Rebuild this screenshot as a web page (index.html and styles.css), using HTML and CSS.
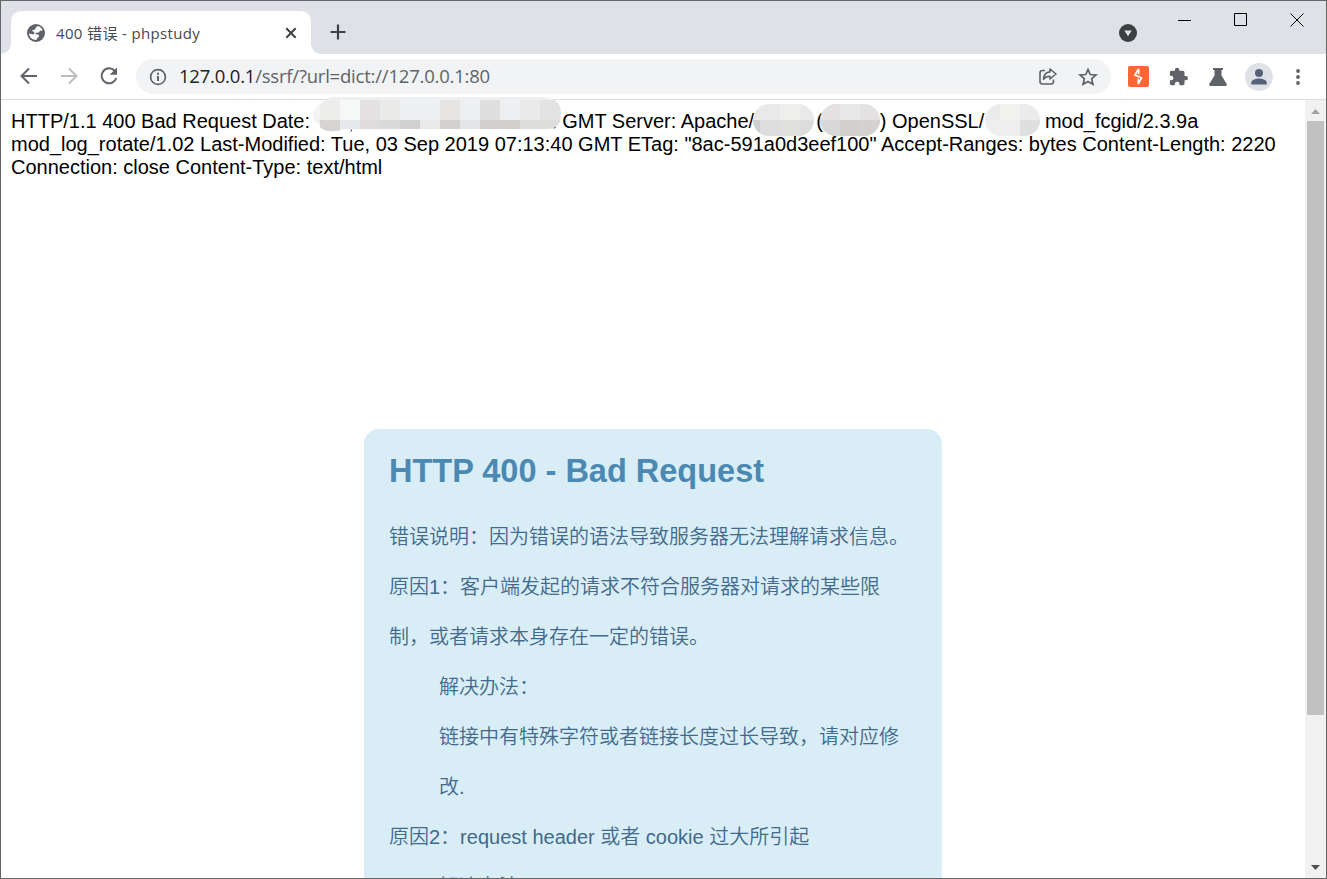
FILE: index.html
```html
<!DOCTYPE html>
<html lang="zh-CN">
  <head>
    <meta charset="UTF-8" />
    <meta name="viewport" content="width=device-width, initial-scale=1.0" />
    <title>400 错误 - phpstudy</title>
    <link rel="stylesheet" href="styles.css">
  </head>
  <body>
    <!-- Tab Strip -->
    <div class="tab-strip">
      <div class="tab">
        <svg class="globe" width="20" height="20" viewBox="0 0 20 20">
          <circle cx="10" cy="10" r="9" fill="#5f6368" />
          <path d="M11.500 3c2.600.5 4.500 2.200 5.300 4.600l-2.800.2-1.200 1.700-3.100.2v1.600l2.600.3.900 1.800-1.700 1.400-1.200 2.200C6 17 3.200 14.200 3 10.600l4 .9 1.600-1-.8-1.900H6.400l.1-1.600 2.700-.4.300-1.700z" fill="#fff" />
        </svg>
        <span class="tab-title">400 错误 - phpstudy</span>
        <svg class="tab-close" width="12" height="12" viewBox="0 0 12 12">
          <path d="M1.300 1.300l9.400 9.400M10.700 1.300l-9.400 9.400" stroke="#3c4043" stroke-width="2" />
        </svg>
      </div>
      <svg class="new-tab" width="16" height="16" viewBox="0 0 16 16">
        <path d="M8 .5v15M.5 8h15" stroke="#3c4043" stroke-width="2.200" />
      </svg>
      <svg class="tab-search" width="18" height="18" viewBox="0 0 18 18">
        <circle cx="9" cy="9" r="9" fill="#3c4043" />
        <path d="M5.300 6.500h7.400L9 12.300z" fill="#dee1e6" />
      </svg>
      <div class="window-buttons">
        <svg width="14" height="14" viewBox="0 0 14 14"><path d="M0 7.500h13" stroke="#000" /></svg>
        <svg width="14" height="14" viewBox="0 0 14 14"><path d="M.5.5h12v12H.5z" fill="none" stroke="#000" /></svg>
        <svg width="14" height="14" viewBox="0 0 14 14"><path d="M.5.5l13 13M13.500.5l-13 13" stroke="#000" /></svg>
      </div>
    </div>

    <!-- Toolbar -->
    <div class="toolbar">
      <div class="nav-buttons">
        <svg width="20" height="20" viewBox="0 0 20 20" fill="none" stroke="#5f6368" stroke-width="2">
          <path d="M18 10H3M10 2.500L2.500 10l7.500 7.500" />
        </svg>
        <svg width="20" height="20" viewBox="0 0 20 20" fill="none" stroke="#babcbe" stroke-width="2">
          <path d="M2 10h15M10 2.500l7.500 7.500-7.500 7.500" />
        </svg>
        <svg width="20" height="20" viewBox="0 0 20 20" fill="none" stroke="#5f6368" stroke-width="2">
          <path d="M15.600 4.700A7.500 7.500 0 1 0 17.300 12" />
          <path d="M18 1.500v7.300h-7.300z" fill="#5f6368" stroke="none" />
        </svg>
      </div>
      <div class="address-bar">
        <svg width="18" height="18" viewBox="0 0 18 18">
          <circle cx="9" cy="9" r="7.400" fill="none" stroke="#5f6368" stroke-width="1.700" />
          <path d="M9 8v5M9 4.700v2" stroke="#5f6368" stroke-width="2" />
        </svg>
        <div class="url"><span>127.0.0.1</span>/ssrf/?url=dict://127.0.0.1:80</div>
        <svg class="share" width="20" height="20" viewBox="0 0 20 20" fill="none" stroke="#5f6368" stroke-width="1.600" stroke-linejoin="round">
          <path d="M7 3.500H4.500Q2 3.500 2 6v8.500q0 2.500 2.500 2.500h8.500q2.500 0 2.500-2.500v-2" />
          <path d="M12 2l6 5-6 5V9.300c-3 0-5 .8-6.500 2.900.3-4 2.500-7 6.500-7.300z" />
        </svg>
        <svg class="star" width="20" height="20" viewBox="0 0 20 20">
          <path d="M10 2.300l2.250 5.200 5.700.5-4.300 3.750 1.300 5.550L10 14.400l-4.950 2.900 1.300-5.550L2.050 8l5.700-.5z" fill="none" stroke="#5f6368" stroke-width="1.700" />
        </svg>
      </div>
      <div class="extensions">
        <svg width="21" height="21" viewBox="0 0 21 21">
          <rect width="21" height="21" rx="2" fill="#ff6633" />
          <path d="M10.600 2.800L7 9l6.500 2.800-3.400 6.400M10.700 3v5.200M10.300 12.500v5.300" fill="none" stroke="#fff" stroke-width="1.700" />
        </svg>
        <svg width="20" height="20" viewBox="0 0 20 20">
          <path d="M16.800 9h-1.300V5.500c0-.9-.7-1.700-1.700-1.700h-3.500V3a2.200 2.200 0 0 0-4.400 0v.8H2.600c-1 0-1.700.8-1.700 1.700v3.200h1.200a2.300 2.300 0 0 1 0 4.600H.9v3.300c0 1 .8 1.700 1.700 1.700h3.300v-1.200a2.300 2.300 0 0 1 4.600 0v1.200h3.300c1 0 1.700-.8 1.700-1.700v-3.300h1.300a2.150 2.150 0 0 0 0-4.300z" fill="#5f6368" />
        </svg>
        <svg width="18" height="18" viewBox="0 0 18 18">
          <path d="M4 0h10v2h-1.500v5.500L17.700 16q.6 1.900-1.200 2h-15Q-.3 17.900.3 16l5.200-8.500V2H4z" fill="#5f6368" />
        </svg>
        <svg class="avatar" width="28" height="28" viewBox="0 0 28 28">
          <circle cx="14" cy="14" r="14" fill="#dee1e6" />
          <circle cx="14" cy="10" r="4" fill="#57617a" />
          <path d="M6.300 21.500v-2c0-2.600 5.100-4 7.700-4s7.700 1.400 7.700 4v2z" fill="#57617a" />
        </svg>
        <svg width="4" height="18" viewBox="0 0 4 18" fill="#5f6368">
          <circle cx="2" cy="3" r="1.900" /><circle cx="2" cy="9" r="1.900" /><circle cx="2" cy="15" r="1.900" />
        </svg>
      </div>
    </div>

    <!-- Page -->
    <div class="viewport">
      <div class="page">
        <div class="response">
          <div class="line">
            <span>HTTP/1.1 400 Bad Request Date:</span>
            <span class="mask mask-date">
              <svg width="248" height="35" viewBox="0 0 248 35">
                <clipPath id="dateClip"><path d="M18 0H232Q248 2 248 17T234 32H30Q24 35 16 34Q7 33 6 27Q0 23 0 17T18 0z" /></clipPath>
                <g clip-path="url(#dateClip)">
                  <rect width="248" height="35" fill="#eeeff0" />
                  <rect y="3" width="7" height="20" fill="#f3f3f2" />
                  <rect x="7" y="3" width="20" height="20" fill="#ededec" />
                  <rect x="27" y="3" width="20" height="20" fill="#f7f9f8" />
                  <rect x="47" y="3" width="20" height="20" fill="#e3e1e2" />
                  <rect x="67" y="3" width="20" height="20" fill="#eaeae8" />
                  <rect x="127" y="3" width="20" height="20" fill="#e6e4e2" />
                  <rect x="167" y="3" width="20" height="20" fill="#dfdfdf" />
                  <rect x="207" y="3" width="20" height="20" fill="#eaeaea" />
                  <rect x="227" y="3" width="21" height="20" fill="#e3e3e3" />
                  <rect x="7" y="23" width="20" height="12" fill="#d5d4d1" />
                  <rect x="27" y="23" width="20" height="12" fill="#e6e8e9" />
                  <rect x="47" y="23" width="20" height="12" fill="#dddbdc" />
                  <rect x="67" y="23" width="20" height="12" fill="#dadada" />
                  <rect x="87" y="23" width="20" height="12" fill="#d1d1d1" />
                  <rect x="107" y="23" width="20" height="12" fill="#e9e9e9" />
                  <rect x="127" y="23" width="20" height="12" fill="#d3d2d1" />
                  <rect x="147" y="23" width="20" height="12" fill="#e4e5e6" />
                  <rect x="167" y="23" width="40" height="12" fill="#d1d0cf" />
                  <rect x="207" y="23" width="41" height="12" fill="#dddddc" />
                </g>
                <path d="M38.700 32.500l-.8 2M241 31.500l1.500-1.500" stroke="#222" />
              </svg>
            </span>
            <span>GMT Server: Apache/</span><span class="mask mask-apache">
              <svg width="61" height="32" viewBox="0 0 61 32">
                <clipPath id="pillA"><rect width="61" height="32" rx="16" /></clipPath>
                <g clip-path="url(#pillA)">
                  <rect width="61" height="32" fill="#e9e9e9" />
                  <rect x="27" width="20" height="16" fill="#efefee" />
                  <rect y="16" width="7" height="16" fill="#cfcfcf" />
                  <rect x="7" y="16" width="20" height="16" fill="#dedede" />
                  <rect x="27" y="16" width="20" height="16" fill="#e0e0df" />
                  <rect x="47" y="16" width="14" height="16" fill="#dcdcdc" />
                </g>
              </svg>
            </span><span>(</span><span class="mask mask-os">
              <svg width="60" height="32" viewBox="0 0 60 32">
                <clipPath id="pillB"><rect width="60" height="32" rx="16" /></clipPath>
                <g clip-path="url(#pillB)">
                  <rect width="60" height="32" fill="#e3e1e2" />
                  <rect x="20" width="20" height="16" fill="#e9e8e8" />
                  <rect y="16" width="20" height="16" fill="#d8d8d8" />
                  <rect x="20" y="16" width="30" height="16" fill="#d0cfce" />
                  <rect x="40" y="16" width="20" height="16" fill="#d3d2d1" />
                </g>
              </svg>
            </span><span>) OpenSSL/</span><span class="mask mask-ssl">
              <svg width="55" height="32" viewBox="0 0 55 32">
                <clipPath id="pillC"><rect width="55" height="32" rx="16" /></clipPath>
                <g clip-path="url(#pillC)">
                  <rect width="55" height="32" fill="#ebebeb" />
                  <rect x="15" width="20" height="16" fill="#f1f1f0" />
                  <rect y="16" width="35" height="16" fill="#efefef" />
                  <rect x="35" y="16" width="20" height="16" fill="#dfdfdf" />
                </g>
              </svg>
            </span>
            <span>mod_fcgid/2.3.9a</span>
          </div>
          <div class="line">mod_log_rotate/1.02 Last-Modified: Tue, 03 Sep 2019 07:13:40 GMT ETag: "8ac-591a0d3eef100" Accept-Ranges: bytes Content-Length: 2220</div>
          <div class="line">Connection: close Content-Type: text/html</div>
        </div>

        <div class="error-box">
          <h1>HTTP 400 - Bad Request</h1>
          <p>错误说明：因为错误的语法导致服务器无法理解请求信息。</p>
          <p>原因1：客户端发起的请求不符合服务器对请求的某些限制，或者请求本身存在一定的错误。</p>
          <p class="solution">解决办法：</p>
          <p class="solution">链接中有特殊字符或者链接长度过长导致，请对应修改.</p>
          <p>原因2：request header 或者 cookie 过大所引起</p>
          <p class="solution">解决办法：</p>
        </div>
      </div>

      <!-- Scrollbar -->
      <div class="scrollbar">
        <svg width="9" height="5" viewBox="0 0 9 5"><path d="M0 5L4.500 0 9 5z" fill="#a3a3a3" /></svg>
        <div class="thumb"></div>
        <svg width="9" height="5" viewBox="0 0 9 5"><path d="M0 0h9L4.500 5z" fill="#505050" /></svg>
      </div>
    </div>
  </body>
</html>
```
FILE: styles.css
```css
/* Global Reset */
* {
  margin: 0;
  padding: 0;
  box-sizing: border-box;
}

html {
  overflow: hidden;
}

body {
  height: 100vh;
  display: flex;
  flex-direction: column;
  border: 1px solid #666;
  background-color: #fff;
  font-family: "Liberation Sans", "Noto Sans CJK SC", sans-serif;
  overflow: hidden;
}

svg {
  display: block;
  flex: none;
}

/* Tab Strip */
.tab-strip {
  height: 53px;
  flex: none;
  display: flex;
  align-items: flex-start;
  padding-left: 10px;
  background-color: #dee1e6;
}

.tab {
  position: relative;
  width: 300px;
  height: 43px;
  margin-top: 10px;
  padding: 0 14px 0 15px;
  display: flex;
  align-items: center;
  background-color: #fff;
  border-radius: 10px 10px 0 0;
}

/* Curved feet of the active tab */
.tab::before,
.tab::after {
  content: "";
  position: absolute;
  bottom: 0;
  width: 10px;
  height: 10px;
}

.tab::before {
  left: -10px;
  background: radial-gradient(circle at 0 0, transparent 9.5px, #fff 10px);
}

.tab::after {
  right: -10px;
  background: radial-gradient(circle at 100% 0, transparent 9.5px, #fff 10px);
}

.tab-title {
  flex: 1;
  margin-left: 10px;
  font-family: "Open Sans", "Noto Sans CJK SC", sans-serif;
  font-size: 15px;
  letter-spacing: 0.35px;
  color: #45494d;
  white-space: nowrap;
}

.new-tab {
  margin: 23px 0 0 19px;
}

.tab-search {
  margin: 23px 41px 0 auto;
}

.window-buttons {
  display: flex;
  gap: 42px;
  padding: 12px 22px 0 0;
}

/* Toolbar */
.toolbar {
  height: 46px;
  flex: none;
  display: flex;
  align-items: center;
  padding: 0 26px 0 18px;
  border-bottom: 1px solid #dadce0;
}

.nav-buttons {
  display: flex;
  gap: 20px;
  margin-bottom: 1px;
}

.address-bar {
  flex: 1;
  height: 35px;
  margin: 0 17px;
  padding: 0 13px;
  display: flex;
  align-items: center;
  background-color: #f1f3f4;
  border-radius: 18px;
}

.url {
  flex: 1;
  margin-left: 12px;
  padding-bottom: 2px;
  font-family: "Open Sans", sans-serif;
  font-size: 18.5px;
  letter-spacing: -0.21px;
  color: #5f6368;
}

.url span {
  color: #202124;
}

.share {
  margin-right: 20px;
}

.extensions {
  display: flex;
  align-items: center;
  gap: 20px;
}

.avatar {
  margin: 0 3px 0 -2px;
}

/* Page */
.viewport {
  flex: 1;
  min-height: 0;
  display: flex;
}

.page {
  flex: 1;
  min-width: 0;
}

.response {
  padding: 10px 10px 0;
  font-size: 20px;
  line-height: 23px;
  color: #000;
}

.line {
  height: 23px;
  white-space: nowrap;
}

/* Mosaic patches laid over the hidden values */
.mask {
  position: relative;
  display: inline-block;
  height: 1px;
}

.mask svg {
  position: absolute;
  left: 0;
  top: -23px;
}

.mask-date {
  width: 241px;
}

.mask-date svg {
  left: -3px;
  top: -30px;
}

.mask-apache {
  width: 62px;
}

.mask-apache svg {
  left: -1px;
}

.mask-os {
  width: 57px;
}

.mask-os svg {
  left: -3px;
}

.mask-ssl {
  width: 55px;
}

.mask-ssl svg {
  left: 1px;
}

/* Error Box */
.error-box {
  width: 578px;
  margin: 250px auto 0;
  padding: 18px 25px;
  background-color: #d9edf7;
  border-radius: 15px;
  color: #416a8c;
}

.error-box h1 {
  height: 65px;
  font-size: 32.5px;
  line-height: 48px;
  color: #4b89b2;
}

.error-box p {
  font-size: 20px;
  font-weight: 350;
  line-height: 50px;
}

.error-box .solution {
  padding-left: 50px;
}

/* Scrollbar */
.scrollbar {
  width: 21px;
  flex: none;
  display: flex;
  flex-direction: column;
  align-items: center;
  padding: 9px 0 8px;
  background-color: #f1f1f1;
}

.thumb {
  width: 17px;
  height: 594px;
  margin: 7px 0 auto;
  background-color: #c1c1c1;
}
```
